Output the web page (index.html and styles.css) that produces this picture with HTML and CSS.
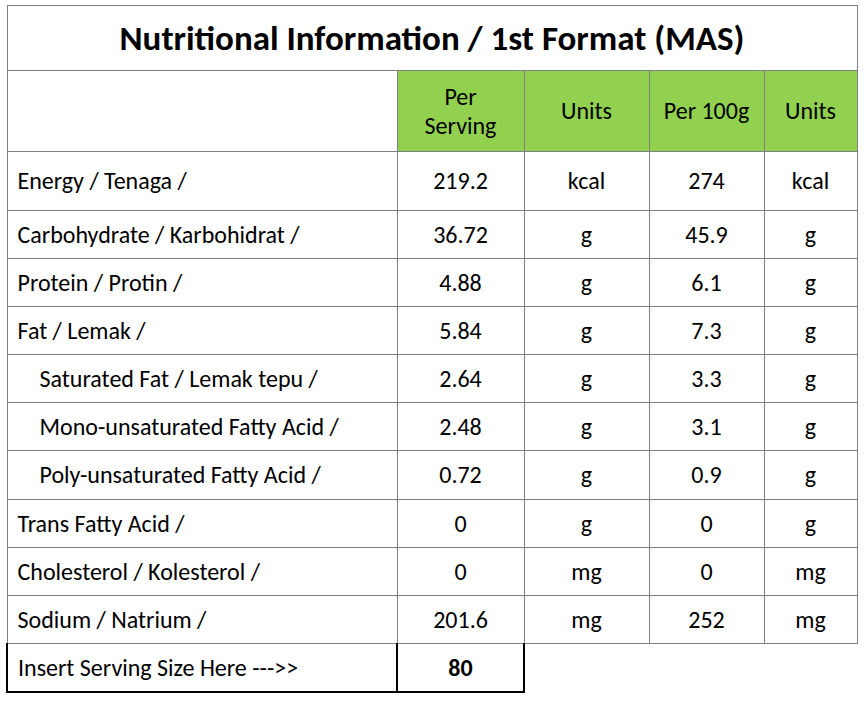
FILE: index.html
```html
<!DOCTYPE html>
<html>
<head>
<meta charset="utf-8">
<link rel="stylesheet" href="styles.css">
</head>
<body>
<table class="nutri">
  <colgroup>
    <col class="c-label">
    <col class="c-ps">
    <col class="c-u1">
    <col class="c-p100">
    <col class="c-u2">
  </colgroup>
  <tr class="r-title"><td colspan="5" class="title">Nutritional Information / 1st Format (MAS)</td></tr>
  <tr class="r-head">
    <td class="blank"></td>
    <td class="head head-wrap">Per<br>Serving</td>
    <td class="head">Units</td>
    <td class="head">Per 100g</td>
    <td class="head">Units</td>
  </tr>
  <tr class="r-energy"><td class="label">Energy / Tenaga /</td><td>219.2</td><td>kcal</td><td>274</td><td>kcal</td></tr>
  <tr class="r"><td class="label">Carbohydrate / Karbohidrat /</td><td>36.72</td><td>g</td><td>45.9</td><td>g</td></tr>
  <tr class="r"><td class="label">Protein / Protin /</td><td>4.88</td><td>g</td><td>6.1</td><td>g</td></tr>
  <tr class="r"><td class="label">Fat / Lemak /</td><td>5.84</td><td>g</td><td>7.3</td><td>g</td></tr>
  <tr class="r"><td class="label sub">Saturated Fat / Lemak tepu /</td><td>2.64</td><td>g</td><td>3.3</td><td>g</td></tr>
  <tr class="r"><td class="label sub">Mono-unsaturated Fatty Acid /</td><td>2.48</td><td>g</td><td>3.1</td><td>g</td></tr>
  <tr class="r r49"><td class="label sub">Poly-unsaturated Fatty Acid /</td><td>0.72</td><td>g</td><td>0.9</td><td>g</td></tr>
  <tr class="r"><td class="label">Trans Fatty Acid /</td><td>0</td><td>g</td><td>0</td><td>g</td></tr>
  <tr class="r"><td class="label">Cholesterol / Kolesterol /</td><td>0</td><td>mg</td><td>0</td><td>mg</td></tr>
  <tr class="r"><td class="label">Sodium / Natrium /</td><td>201.6</td><td>mg</td><td>252</td><td>mg</td></tr>
  <tr class="r r-last"><td class="label input-label">Insert Serving Size Here ---&gt;&gt;</td><td class="input-val">80</td><td class="empty"></td><td class="empty"></td><td class="empty"></td></tr>
</table>
</body>
</html>
```

FILE: styles.css
```css
html, body {
  margin: 0;
  padding: 0;
  background: #ffffff;
}
body {
  padding: 5px 0 0 6px;
  font-family: Carlito, Lato, "Open Sans", sans-serif;
  color: #000000;
}
.nutri {
  border-collapse: collapse;
  table-layout: fixed;
  width: 850px;
  font-size: 24px;
}
.c-label { width: 390px; }
.c-ps { width: 127px; }
.c-u1 { width: 125px; }
.c-p100 { width: 115px; }
.c-u2 { width: 93px; }
.nutri td {
  border: 1px solid #808080;
  padding: 0;
  text-align: center;
  vertical-align: middle;
  line-height: 26px;
  white-space: nowrap;
}
.r-title td { height: 64px; }
.nutri td.title {
  font-size: 35px;
  font-weight: 700;
  line-height: 40px;
}
.r-head td { height: 80px; }
.head {
  background: #92d050;
}
.nutri td.head-wrap {
  line-height: 29px;
}
.r-energy td { height: 58px; }
.r td { height: 47px; }
.r49 td { height: 48px; }
.nutri td.label {
  text-align: left;
  padding-left: 10px;
}
.nutri td.sub {
  padding-left: 32px;
}
.nutri td.input-label {
  border: 2px solid #000000;
  border-top: 1px solid #808080;
}
.nutri td.input-val {
  border: 2px solid #000000;
  border-top: 1px solid #808080;
  font-weight: 700;
}
.nutri td.empty {
  border-left: none;
  border-right: none;
  border-bottom: none;
}
.r-last td { height: 47px; }
```
